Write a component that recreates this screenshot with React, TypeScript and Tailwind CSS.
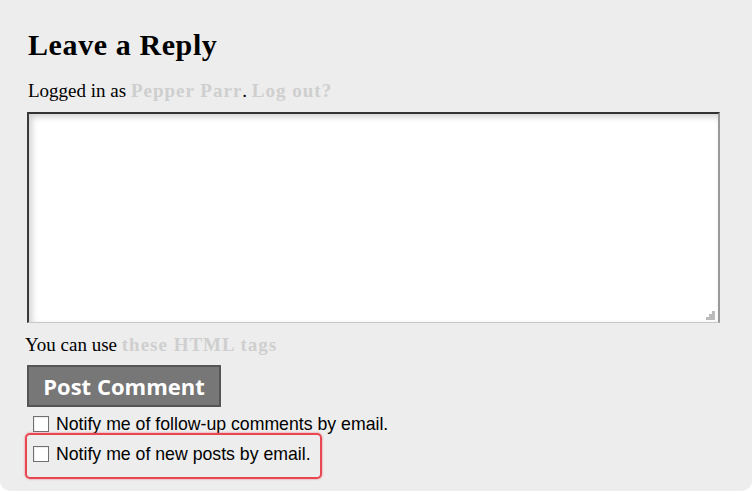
import { useState } from "react";

const serif = "font-['Liberation_Serif','Times_New_Roman',serif]";
const sans = "font-['Liberation_Sans',Arial,sans-serif]";

function ResizeGrip() {
  // the little dotted triangle in the textarea's corner
  return (
    <svg width="9" height="9" viewBox="0 0 9 9" className="absolute bottom-[2px] right-[3px]" aria-hidden>
      <rect x="6" y="0" width="3" height="3" fill="#bbb" />
      <rect x="3" y="3" width="3" height="3" fill="#bbb" />
      <rect x="6" y="3" width="3" height="3" fill="#bbb" />
      <rect x="0" y="6" width="3" height="3" fill="#bbb" />
      <rect x="3" y="6" width="3" height="3" fill="#bbb" />
      <rect x="6" y="6" width="3" height="3" fill="#bbb" />
    </svg>
  );
}

function Notify({ label }: { label: string }) {
  const [checked, setChecked] = useState(false);
  return (
    <label className={`flex items-center gap-[7px] whitespace-nowrap ${sans} text-[17.7px] leading-[20px] text-black`}>
      <span
        onClick={() => setChecked(!checked)}
        className="h-[16px] w-[16px] shrink-0 border border-[#707070] bg-white shadow-[inset_1px_1px_1px_rgba(0,0,0,0.08)]"
      >
        {checked && <span className="block h-full w-full bg-[#333] [clip-path:inset(3px)]" />}
      </span>
      {label}
    </label>
  );
}

export default function App() {
  return (
    <div className="h-[494px] w-[752px] bg-white">
      <div className="h-[491px] rounded-b-[10px] bg-[#ededed] pl-[27px] pr-[32px] pt-[28px]">
        <h3 className={`${serif} pl-px text-[30px] font-bold leading-[34px] tracking-[0.6px] text-black`}>
          Leave a Reply
        </h3>

        <p className={`${serif} mt-[18px] pl-px text-[19px] leading-[22px] text-black`}>
          Logged in as <a className="font-bold tracking-[1px] text-[#cfcfcf]">Pepper Parr</a>.{" "}
          <a className="font-bold tracking-[1px] text-[#cfcfcf]">Log out?</a>
        </p>

        <div className="relative mt-[10px] h-[211px] border-b border-l-2 border-r-2 border-t-2 border-b-[#c8c8c8] border-l-[#3a3a3a] border-r-[#999] border-t-[#333] bg-white shadow-[inset_3px_3px_6px_rgba(0,0,0,0.18)]">
          <ResizeGrip />
        </div>

        <p className={`${serif} -ml-[2px] mt-[11px] text-[19px] leading-[22px] text-black`}>
          You can use <a className="font-bold tracking-[1px] text-[#cfcfcf]">these HTML tags</a>
        </p>

        <button className="mt-[9px] h-[42px] w-[194px] border-2 border-[#555] bg-[#777] font-['Open_Sans',Lato,sans-serif] text-[22px] font-bold leading-none text-white">
          Post Comment
        </button>

        <div className="mt-[7px] flex flex-col items-start pl-[6px]">
          <Notify label="Notify me of follow-up comments by email." />
          <div className="-ml-[8px] -mt-px rounded-[5px] border-2 border-[#e84650] px-[6px] pb-[13px] pt-[9px] shadow-[0_0_2px_rgba(232,69,80,0.8)]">
            <div className="w-[281px]">
              <Notify label="Notify me of new posts by email." />
            </div>
          </div>
        </div>
      </div>
    </div>
  );
}
